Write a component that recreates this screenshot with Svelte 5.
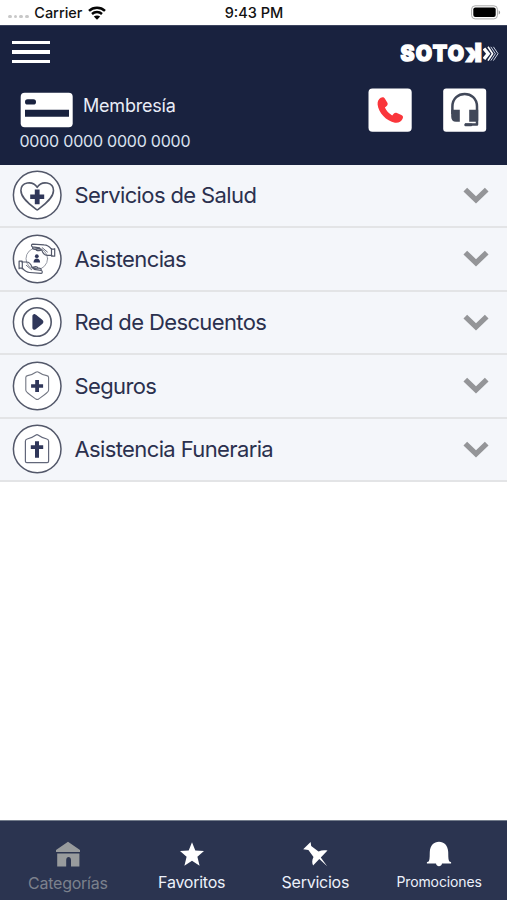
<script>
  const categories = [
    { id: 'salud', label: 'Servicios de Salud' },
    { id: 'asistencias', label: 'Asistencias' },
    { id: 'descuentos', label: 'Red de Descuentos' },
    { id: 'seguros', label: 'Seguros' },
    { id: 'funeraria', label: 'Asistencia Funeraria' }
  ];
  const tabs = [
    { id: 'home', label: 'Categorías' },
    { id: 'star', label: 'Favoritos' },
    { id: 'pin', label: 'Servicios' },
    { id: 'bell', label: 'Promociones' }
  ];
</script>

{#snippet hand()}
  <path d="M42.5 15.2h-3.3c-2.2-2.8-4.3-4.2-7.3-4.3l-11.5-.8c-1.4 0-1.5 2.4 0 2.8l7 1-3.6 1.2M20.5 13.2c-.6 1.8 1 2.3 3.1 2l4.9-.2M23.8 15.5c.3 1.4 2 1.4 4.2.8l1.5-.4c1 3.1 3.2 5.5 5.8 5.5h4.5M39.3 14.5v7.5M42.5 14.7v7.5h-3" />
  <path d="m30 13.7 5.2 4.3" stroke-width=".9" />
{/snippet}

<div class="screen">
  <div class="status">
    <div class="carrier">
      <span class="dots"><i></i><i></i><i></i><i></i></span>
      <span class="carrier-name">Carrier</span>
      <svg width="18" height="14" viewBox="0 0 18 14" fill="none" stroke="#050505">
        <path d="M1 4.8C5.5.6 12.5.6 17 4.8" stroke-width="2.5" />
        <path d="M4 8c2.8-2.6 7.2-2.6 10 0" stroke-width="2.4" />
        <path d="M9 13.8 5.8 10.6c1.8-1.6 4.6-1.6 6.4 0Z" fill="#050505" stroke="none" />
      </svg>
    </div>
    <span class="time">9:43 PM</span>
    <svg class="battery" width="31" height="15" viewBox="0 0 31 15">
      <rect x="1.6" y=".8" width="25.8" height="13.1" rx="3.5" fill="#fff" stroke="#aaa" />
      <rect x="3.3" y="2.5" width="22.4" height="9.6" rx="2" fill="#000" />
      <path d="M28.7 5.2c1.9.8 1.9 3.5 0 4.3Z" fill="#999" />
    </svg>
  </div>

  <header>
    <div class="topline">
      <div class="menu"><i></i><i></i><i></i></div>
      <div class="logo">
        <span class="word">SOTO</span><span class="flip">k</span>
        <svg width="16" height="18" viewBox="0 0 16 18" fill="none" stroke="#fff">
          <path d="m1 4.5 4.2 5.2L1 15" stroke-width="3.4" />
          <path d="m5 2.8 4.6 6.9L5 16.6" stroke-width="1.6" />
          <path d="m7.8 2.8 4.6 6.9-4.6 6.9M10.4 2.8 15 9.7l-4.6 6.9" stroke-width="1" stroke="#cdd3e4" />
        </svg>
      </div>
    </div>
    <div class="member">
      <div class="account">
        <div class="card-line">
          <svg width="53" height="36" viewBox="0 0 53 36">
            <rect x=".7" y=".7" width="52" height="34.5" rx="4" fill="#fff" />
            <rect x="5" y="7.3" width="11" height="5.2" rx="2.6" fill="#19223f" />
            <path d="M5 17.8h44v7H5z" fill="#19223f" />
          </svg>
          <span class="member-label">Membresía</span>
        </div>
        <div class="number">0000 0000 0000 0000</div>
      </div>
      <div class="actions">
        <svg width="44" height="44" viewBox="0 0 44 44">
          <rect x=".5" y=".5" width="43.2" height="43.2" rx="4" fill="#fff" />
          <path d="M12.7 9.7c1.6-.8 3.2-.7 4.1.7l2.6 4.4c.7 1.3.2 2.4-1 3.4l-1.5 1.3c1.3 3.2 4 6 7.3 7.9l1.7-1.8c.8-.9 1.9-1.1 3-.6l4.5 2c1.7.8 2 2.2 1.2 3.7-1.4 3-4.3 4.6-7.7 4C18.4 33 10.4 24.5 9.6 16.4c-.2-3 .9-5.5 3.1-6.7Z" fill="#fa363b" />
        </svg>
        <svg width="44" height="44" viewBox="0 0 44 44">
          <rect x=".2" y=".5" width="43" height="43.2" rx="3" fill="#fff" />
          <path d="M9.4 26v-7.4C9.4 1.8 34 1.8 34 18.6V36.5H22" fill="none" stroke="#414859" stroke-width="2.5" stroke-linejoin="round" />
          <path d="M8.2 21.8h8.6v12h-3.8c-3 0-4.8-2-4.8-5Zm18 0h9v10.4c0 1-.7 1.6-1.8 1.6h-7.2Z" fill="#414859" />
          <rect x="21.3" y="35.4" width="8" height="2.8" rx="1.2" fill="#414859" />
        </svg>
      </div>
    </div>
  </header>

  <main>
    {#each categories as category}
      <div class="row">
        <svg class="badge" width="50" height="50" viewBox="-.2 0 50 50" fill="none" stroke="#53586a" stroke-width="1.2" stroke-linejoin="round" stroke-linecap="round">
          <circle cx="25" cy="25" r="23.8" fill="#fff" stroke-width="1.5" />
          {#if category.id === 'salud'}
            <path d="M25 40C20 36 8.7 29 8.7 20.5c0-8.5 11.6-10.3 16.3-3.2 4.7-7.1 16.3-5.3 16.3 3.2C41.3 29 30 36 25 40Z" stroke-width="1.6" />
            <path d="M22.6 19.4h4.8v5H32v4.7h-4.6v5.2h-4.8v-5.2H18v-4.7h4.6Z" fill="#30375a" stroke="none" />
          {:else if category.id === 'asistencias'}
            <circle cx="24.6" cy="24.7" r="10.8" stroke="#8a8e9a" stroke-width=".9" />
            <circle cx="24.6" cy="22.2" r="1.9" fill="#30375a" stroke="none" />
            <path d="M21.3 28.4c0-5.2 6.6-5.2 6.6 0Z" fill="#30375a" stroke="none" />
            {@render hand()}
            <g transform="rotate(180 24.7 24.7)">{@render hand()}</g>
          {:else if category.id === 'descuentos'}
            <circle cx="24.7" cy="25" r="14.3" stroke-width="1.6" />
            <path d="M21 18.8c0-.8 1.3-1.3 2-.7l6.5 5.2c1.2 1 1.2 2.1 0 3.1L23 31.7c-.7.6-2 .2-2-.7Z" fill="#30375a" stroke="#30375a" stroke-width="1.6" />
          {:else if category.id === 'seguros'}
            <path d="M23.6 11.3c1-.7 1.8-.7 2.8 0 2.4 1.8 5 2.8 8.2 3.3 1.1.2 1.8.8 1.8 2v12.7c0 2-4.8 5.2-10 8.7-1 .7-1.8.7-2.8 0-5.2-3.5-10-6.7-10-8.7V16.6c0-1.2.7-1.8 1.8-2 3.2-.5 5.8-1.5 8.2-3.3Z" stroke="#737783" stroke-width="1.1" />
            <path d="M23 19h3.8v4.2h4.1v3.6h-4.1V31H23v-4.2h-4.1v-3.6H23Z" fill="#30375a" stroke="none" />
          {:else}
            <path d="M23.4 11.2c1-.7 1.8-.7 2.8 0 2.4 1.8 5 2.8 8.4 3.8 1.1.3 1.8 1 1.8 2.2v20.1c0 .9-.5 1.4-1.4 1.4H14.6c-.9 0-1.4-.5-1.4-1.4V17.2c0-1.2.7-1.9 1.8-2.2 3.4-1 6-2 8.4-3.8Z" stroke="#62677a" />
            <path d="M22.8 17.3h4v4h4.2v3.8h-4.2v8.6h-4v-8.6h-4.2v-3.8h4.2Z" fill="#30375a" stroke="none" />
          {/if}
        </svg>
        <span class="label">{category.label}</span>
        <svg class="chevron" width="26" height="17" viewBox="0 0 26 17">
          <path d="m2.3 2.6 10.7 10.2L23.7 2.6" fill="none" stroke="#949598" stroke-width="5.3" />
        </svg>
      </div>
    {/each}
  </main>

  <nav>
    {#each tabs as tab}
      <div class="tab {tab.id}">
        <svg width="28" height="28" viewBox="0 0 28 28" fill="currentColor">
          {#if tab.id === 'home'}
            <path d="m14 1.7 12 8.3v1.9H2V10ZM3.2 13.5h22.2v13H17v-6.6c0-4-4.8-4-4.8 0v6.6h-9Z" />
          {:else if tab.id === 'star'}
            <path d="m14 2.3 3.3 8.2 8.7.6-6.6 5.7 2.2 9-7.6-5-7.6 5 2.2-9L2 11.1l8.7-.6Z" />
          {:else if tab.id === 'pin'}
            <path d="m9.6 1.9.6 4 7.3 5.5c3.3-1.4 6.3-1.5 9-.8l-6.7 7 6.4 8.6-7.9-7.3-6.2 6.7c-1.2-2.8-1.2-5.3.4-8.5L7.4 10.1l-5.2-.8Z" />
          {:else}
            <path d="M3.9 21.2c1.1-3 .7-6 .9-9.4C5.2 5.2 9 1.7 14 1.7s8.8 3.5 9.2 10.1c.2 3.4-.2 6.4.9 9.4l2 1v1.4h-9.1c-.5 3.5-5.5 3.5-6 0H1.9v-1.4Z" />
          {/if}
        </svg>
        <span>{tab.label}</span>
      </div>
    {/each}
  </nav>
</div>

<style>
  :global(body) { margin: 0; background: #fff; }
  .screen { width: 507px; height: 900px; display: flex; flex-direction: column; overflow: hidden; background: #fff; font-family: Inter, Roboto, sans-serif; }
  svg { display: block; flex: none; }
  .status { height: 25px; flex: none; display: grid; grid-template-columns: 1fr 70px 1fr; align-items: center; box-sizing: border-box; padding: 0 6px 0 8px; color: #111; font-size: 14.5px; font-weight: 500; }
  .carrier { display: flex; align-items: center; gap: 5.5px; }
  .dots { display: flex; gap: 2px; padding-top: 8px; }
  .dots i { width: 3.7px; height: 3.7px; border-radius: 50%; background: #c8c8c8; }
  .carrier-name { width: 48px; white-space: nowrap; }
  .time { text-align: center; white-space: nowrap; margin-left: -1px; }
  .battery { justify-self: end; }
  header { height: 139.5px; flex: none; box-sizing: border-box; background: #19223f; color: #fff; border-top: 1px solid #3c445e; }
  .topline { height: 62px; display: flex; justify-content: space-between; padding: 0 8px 0 12px; }
  .menu { width: 38px; padding-top: 14.5px; display: flex; flex-direction: column; gap: 6.3px; }
  .menu i { height: 3.4px; background: #fff; }
  .logo { display: flex; height: 18px; margin-top: 18px; align-items: center; font-weight: 900; line-height: 18px; }
  .word { width: 64.5px; font-size: 21px; letter-spacing: 1.3px; padding-top: 2px; -webkit-text-stroke: 1.3px #fff; white-space: nowrap; }
  .flip { width: 18px; font-size: 26px; transform: scaleX(-1.06); display: flex; justify-content: center; -webkit-text-stroke: .8px #fff; }
  .member { display: flex; justify-content: space-between; padding: 0 20px; }
  .account { padding-top: 4px; }
  .card-line { display: flex; align-items: center; gap: 10px; height: 36px; }
  .member-label { font-size: 18px; letter-spacing: -.2px; padding-bottom: 9px; color: #e9edf7; }
  .number { margin: 3px 0 0 -.5px; font-size: 16px; letter-spacing: -.22px; line-height: 20px; color: #dce2f0; white-space: nowrap; }
  .actions { display: flex; gap: 31px; }
  main { flex: 1; }
  .row { height: 63.5px; box-sizing: border-box; display: flex; align-items: center; padding: 0 18px 0 12px; background: #f4f6fa; border-bottom: 2.5px solid #e3e4e6; }
  .label { flex: 1; margin-left: 12.5px; font-size: 22px; letter-spacing: -.62px; color: #2b304e; white-space: nowrap; }
  nav { height: 80px; flex: none; box-sizing: border-box; border-top: 1px solid #737c8b; padding: 18.5px 6px 0; display: grid; grid-template-columns: repeat(4, 1fr); background: #2b3450; color: #fff; }
  .tab { display: flex; flex-direction: column; align-items: center; }
  .tab span { margin-top: 5px; font-size: 16px; letter-spacing: -.25px; line-height: 18px; color: #edf1fb; white-space: nowrap; }
  .home { color: #989b9d; }
  .tab.home span { color: #7c818d; margin-top: 6px; }
  .tab.bell span { font-size: 14px; letter-spacing: -.12px; }
</style>
